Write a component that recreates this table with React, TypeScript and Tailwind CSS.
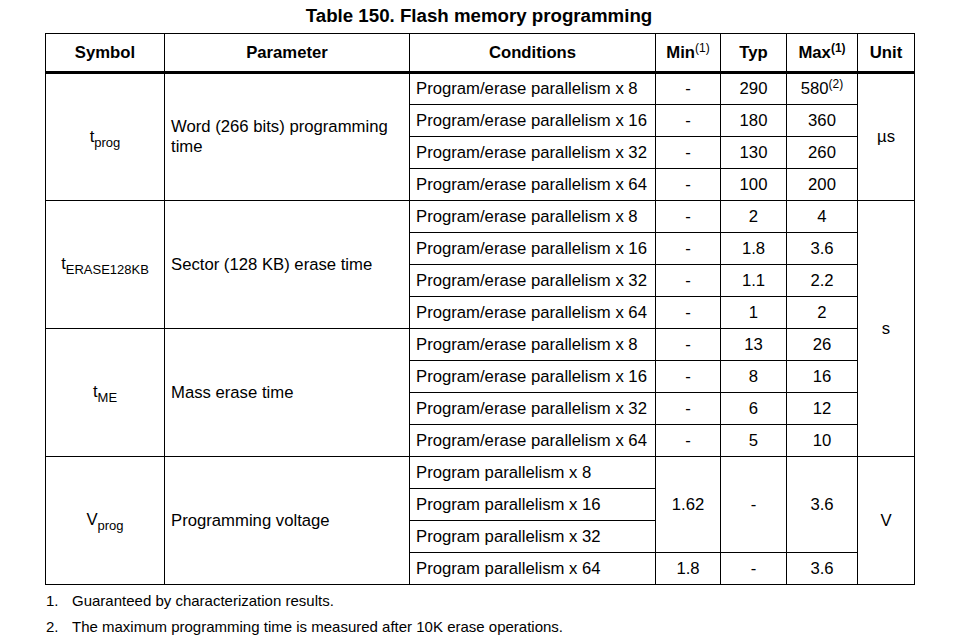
import React from "react";

const b = "border border-black";
const cL = `${b} pl-[6px] text-left align-middle`;
const cC = `${b} text-center align-middle`;

function Sym({ base, sub }: { base: string; sub: string }) {
  return (
    <span>
      {base}
      <span className="relative top-[5px] text-[13px]">{sub}</span>
    </span>
  );
}

type Row = { cond: string; min: string; typ: string; max: React.ReactNode };

const groups: {
  sym: React.ReactNode;
  param: React.ReactNode;
  rows: Row[];
}[] = [
  {
    sym: <Sym base="t" sub="prog" />,
    param: "Word (266 bits) programming time",
    rows: [
      {
        cond: "Program/erase parallelism x 8",
        min: "-",
        typ: "290",
        max: (
          <span>
            580<sup className="text-[12px] relative -top-[6px] align-baseline">(2)</sup>
          </span>
        ),
      },
      { cond: "Program/erase parallelism x 16", min: "-", typ: "180", max: "360" },
      { cond: "Program/erase parallelism x 32", min: "-", typ: "130", max: "260" },
      { cond: "Program/erase parallelism x 64", min: "-", typ: "100", max: "200" },
    ],
  },
  {
    sym: <Sym base="t" sub="ERASE128KB" />,
    param: "Sector (128 KB) erase time",
    rows: [
      { cond: "Program/erase parallelism x 8", min: "-", typ: "2", max: "4" },
      { cond: "Program/erase parallelism x 16", min: "-", typ: "1.8", max: "3.6" },
      { cond: "Program/erase parallelism x 32", min: "-", typ: "1.1", max: "2.2" },
      { cond: "Program/erase parallelism x 64", min: "-", typ: "1", max: "2" },
    ],
  },
  {
    sym: <Sym base="t" sub="ME" />,
    param: "Mass erase time",
    rows: [
      { cond: "Program/erase parallelism x 8", min: "-", typ: "13", max: "26" },
      { cond: "Program/erase parallelism x 16", min: "-", typ: "8", max: "16" },
      { cond: "Program/erase parallelism x 32", min: "-", typ: "6", max: "12" },
      { cond: "Program/erase parallelism x 64", min: "-", typ: "5", max: "10" },
    ],
  },
];

export default function App() {
  return (
    <div
      className="w-[956px] h-[640px] bg-white text-black overflow-hidden"
      style={{ fontFamily: '"Liberation Sans", Arial, sans-serif' }}
    >
      <div className="h-[33px] flex items-center justify-center pl-[2px] pb-[1px] text-[18.7px] font-bold leading-none">
        Table 150. Flash memory programming
      </div>
      <table className="ml-[45px] w-[869px] table-fixed border-collapse text-[16.7px] leading-[20px]">
        <colgroup>
          <col className="w-[119px]" />
          <col className="w-[245px]" />
          <col className="w-[246px]" />
          <col className="w-[65px]" />
          <col className="w-[66px]" />
          <col className="w-[71px]" />
          <col className="w-[57px]" />
        </colgroup>
        <thead>
          <tr className="h-[39px] font-bold">
            <th className={`${cC} border-b-[3px]`}>Symbol</th>
            <th className={`${cC} border-b-[3px]`}>Parameter</th>
            <th className={`${cC} border-b-[3px]`}>Conditions</th>
            <th className={`${cC} border-b-[3px]`}>
              Min<sup className="text-[12px] font-normal relative -top-[6px] align-baseline">(1)</sup>
            </th>
            <th className={`${cC} border-b-[3px]`}>Typ</th>
            <th className={`${cC} border-b-[3px]`}>
              Max<sup className="text-[12px] relative -top-[6px] align-baseline">(1)</sup>
            </th>
            <th className={`${cC} border-b-[3px]`}>Unit</th>
          </tr>
        </thead>
        <tbody>
          {groups.map((g, gi) =>
            g.rows.map((r, ri) => (
              <tr key={`${gi}-${ri}`} className="h-[32px]">
                {ri === 0 && (
                  <td rowSpan={4} className={cC}>
                    {g.sym}
                  </td>
                )}
                {ri === 0 && (
                  <td rowSpan={4} className={cL}>
                    {g.param}
                  </td>
                )}
                <td className={cL}>{r.cond}</td>
                <td className={cC}>{r.min}</td>
                <td className={cC}>{r.typ}</td>
                <td className={cC}>{r.max}</td>
                {gi === 0 && ri === 0 && (
                  <td rowSpan={4} className={cC}>
                    µs
                  </td>
                )}
                {gi === 1 && ri === 0 && (
                  <td rowSpan={8} className={cC}>
                    s
                  </td>
                )}
              </tr>
            ))
          )}
          <tr className="h-[32px]">
            <td rowSpan={4} className={cC}>
              <Sym base="V" sub="prog" />
            </td>
            <td rowSpan={4} className={cL}>
              Programming voltage
            </td>
            <td className={cL}>Program parallelism x 8</td>
            <td rowSpan={3} className={cC}>
              1.62
            </td>
            <td rowSpan={3} className={cC}>
              -
            </td>
            <td rowSpan={3} className={cC}>
              3.6
            </td>
            <td rowSpan={4} className={cC}>
              V
            </td>
          </tr>
          <tr className="h-[32px]">
            <td className={cL}>Program parallelism x 16</td>
          </tr>
          <tr className="h-[32px]">
            <td className={cL}>Program parallelism x 32</td>
          </tr>
          <tr className="h-[32px]">
            <td className={cL}>Program parallelism x 64</td>
            <td className={cC}>1.8</td>
            <td className={cC}>-</td>
            <td className={cC}>3.6</td>
          </tr>
        </tbody>
      </table>
      <div className="mt-[3px] ml-[46px] text-[15px] leading-[26px]">
        <div className="flex">
          <span className="w-[26px]">1.</span>
          <span>Guaranteed by characterization results.</span>
        </div>
        <div className="flex">
          <span className="w-[26px]">2.</span>
          <span>The maximum programming time is measured after 10K erase operations.</span>
        </div>
      </div>
    </div>
  );
}
